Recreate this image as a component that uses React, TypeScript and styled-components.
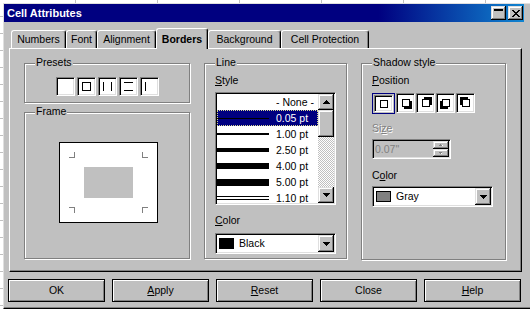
import React from 'react';
import styled, { createGlobalStyle, css } from 'styled-components';

const FONT = `"Liberation Sans", Arial, sans-serif`;

const GlobalStyle = createGlobalStyle`
  html, body { margin: 0; padding: 0; }
  body {
    width: 530px;
    height: 309px;
    overflow: hidden;
    font-family: ${FONT};
    font-size: 10.5px;
    color: #000;
    background-color: #fff;
    background-image:
      repeating-linear-gradient(90deg, transparent 0 81px, #c0c0c0 81px 82px),
      repeating-linear-gradient(180deg, transparent 0 16px, #c0c0c0 16px 17px);
    background-position: -6px 0, 0 0;
  }
  #root { padding: 3px 0 0 3px; }
`;

const raised = css`
  background: #c0c0c0;
  box-shadow: inset -1px -1px #000, inset 1px 1px #dfdfdf, inset -2px -2px #808080, inset 2px 2px #fff;
`;

const sunken = css`
  border: 1px solid;
  border-color: #808080 #fff #fff #808080;
  box-shadow: inset 1px 1px #000, inset -1px -1px #dfdfdf;
  padding: 1px;
`;

const Window = styled.div`
  box-sizing: border-box;
  width: 530px;
  height: 306px;
  background: #c0c0c0;
  border-top: 1px solid #dfdfdf;
  border-left: 1px solid #dfdfdf;
  border-bottom: 1px solid #000;
  box-shadow: inset 0 -1px #808080;
  display: flex;
  flex-direction: column;
  align-items: flex-start;
`;

const TitleBar = styled.div`
  box-sizing: border-box;
  width: 520px;
  height: 18px;
  padding: 0 1px 0 3px;
  display: flex;
  align-items: center;
  background: linear-gradient(90deg, #000080 0%, #000080 72%, #1084d0 100%);
  color: #fff;
  font-weight: bold;
  font-size: 11px;
  line-height: 13px;
`;

const TitleButtons = styled.div`
  margin-left: auto;
  display: flex;
  gap: 2px;
`;

const TitleButton = styled.div`
  ${raised};
  width: 15px;
  height: 14px;
  display: flex;
  align-items: center;
  justify-content: center;
`;

const TabsRow = styled.div`
  position: relative;
  z-index: 1;
  display: flex;
  align-items: flex-end;
  height: 20px;
  margin-top: 6px;
  padding-left: 7px;
`;

const Tab = styled.div<{ $w: number; $active?: boolean }>`
  box-sizing: border-box;
  width: ${p => p.$w}px;
  height: ${p => (p.$active ? 21 : 18)}px;
  margin-bottom: ${p => (p.$active ? -1 : 0)}px;
  padding-top: ${p => (p.$active ? 4 : 2)}px;
  border-top: 1px solid #fff;
  border-left: 1px solid #fff;
  border-right: 1px solid #000;
  border-radius: 3px 3px 0 0;
  box-shadow: inset -1px 0 #808080;
  background: #c0c0c0;
  text-align: center;
  line-height: 13px;
  white-space: nowrap;
  font-weight: ${p => (p.$active ? 'bold' : 'normal')};
`;

const Panel = styled.div`
  box-sizing: border-box;
  margin-left: 5px;
  width: 513px;
  height: 224px;
  border-top: 1px solid #fff;
  border-left: 1px solid #fff;
  border-right: 1px solid #000;
  border-bottom: 1px solid #000;
  box-shadow: inset -1px -1px #808080;
  padding: 14px 0 0 14px;
  display: flex;
  gap: 14px;
  align-items: flex-start;
`;

const Column = styled.div`
  display: flex;
  flex-direction: column;
  gap: 9px;
`;

const Group = styled.div<{ $w: number; $h: number }>`
  position: relative;
  box-sizing: border-box;
  width: ${p => p.$w}px;
  height: ${p => p.$h}px;
  border: 1px solid #808080;
  box-shadow: inset 1px 1px #fff, 1px 1px #fff;
`;

const PresetsGroup = styled(Group)`
  display: flex;
  justify-content: center;
  padding: 13px 0 0 1px;
`;

const FrameGroup = styled(Group)`
  padding: 29px 0 0 34px;
`;

const FieldsGroup = styled(Group)`
  padding: 10px 0 0 10px;
  display: flex;
  flex-direction: column;
  align-items: flex-start;
`;

const Legend = styled.span`
  position: absolute;
  top: -8px;
  left: 10px;
  padding: 0 1px;
  background: #c0c0c0;
  line-height: 13px;
  white-space: nowrap;
`;

const FieldLabel = styled.div<{ $mt?: number; $mb?: number; $disabled?: boolean }>`
  line-height: 13px;
  margin-top: ${p => p.$mt ?? 0}px;
  margin-bottom: ${p => p.$mb ?? 0}px;
  color: ${p => (p.$disabled ? '#808080' : '#000')};
  text-shadow: ${p => (p.$disabled ? '1px 1px #fff' : 'none')};
`;

const PresetRow = styled.div`
  display: flex;
  gap: 2px;
  height: 19px;
`;

const PresetButton = styled.div`
  box-sizing: border-box;
  width: 19px;
  height: 19px;
  ${sunken};
  background: #fff;
  display: flex;
`;

const ListBox = styled.div`
  box-sizing: border-box;
  width: 121px;
  height: 113px;
  ${sunken};
  background: #fff;
  display: flex;
`;

const ListItems = styled.div`
  flex: 1;
  overflow: hidden;
  display: flex;
  flex-direction: column;
`;

const ListRow = styled.div<{ $selected?: boolean }>`
  flex: none;
  height: 16px;
  display: flex;
  align-items: center;
  line-height: 16px;
  white-space: nowrap;
  background: ${p => (p.$selected ? '#000080' : 'transparent')};
  color: ${p => (p.$selected ? '#fff' : '#000')};
  outline: ${p => (p.$selected ? '1px dotted #d8d890' : 'none')};
  outline-offset: -1px;
`;

const LineSample = styled.div<{ $t: number; $double?: boolean }>`
  flex: none;
  box-sizing: border-box;
  width: 52px;
  margin-right: 7px;
  height: ${p => (p.$double ? 4 : p.$t)}px;
  background: ${p => (p.$double ? 'transparent' : '#000')};
  border-top: ${p => (p.$double ? '1px solid #000' : 'none')};
  border-bottom: ${p => (p.$double ? '1px solid #000' : 'none')};
`;

const ScrollBar = styled.div`
  width: 16px;
  display: flex;
  flex-direction: column;
`;

const ScrollButton = styled.div<{ $h: number }>`
  ${raised};
  flex: none;
  height: ${p => p.$h}px;
  display: flex;
  align-items: center;
  justify-content: center;
`;

const ScrollTrack = styled.div`
  flex: 1;
  background: repeating-conic-gradient(#c0c0c0 0 25%, #fff 0 50%) 0 0 / 2px 2px;
`;

const Select = styled.div<{ $w: number }>`
  box-sizing: border-box;
  width: ${p => p.$w}px;
  height: 21px;
  ${sunken};
  background: #fff;
  display: flex;
  align-items: center;
`;

const Swatch = styled.div<{ $color: string }>`
  box-sizing: border-box;
  width: 15px;
  height: 11px;
  margin-left: 2px;
  background: ${p => p.$color};
  border: 1px solid #000;
`;

const SelectText = styled.div`
  flex: 1;
  margin-left: 5px;
  line-height: 17px;
`;

const DropButton = styled.div`
  ${raised};
  width: 16px;
  height: 17px;
  display: flex;
  align-items: center;
  justify-content: center;
`;

const PosRow = styled.div`
  display: flex;
  gap: 1px;
  align-items: flex-start;
`;

const PosButton = styled.div<{ $sel?: boolean }>`
  box-sizing: border-box;
  width: ${p => (p.$sel ? 23 : 19)}px;
  height: ${p => (p.$sel ? 21 : 20)}px;
  display: flex;
  ${p => p.$sel && css`
    border: 1px solid #000080;
    padding: 1px;
  `}
`;

const PosFace = styled.div`
  flex: 1;
  box-sizing: border-box;
  ${sunken};
  background: #fff;
  display: flex;
  align-items: center;
  justify-content: center;
`;

const SizeField = styled.div`
  box-sizing: border-box;
  width: 79px;
  height: 20px;
  ${sunken};
  background: #c0c0c0;
  display: flex;
  align-items: stretch;
`;

const SizeText = styled.div`
  flex: 1;
  padding-left: 1px;
  line-height: 16px;
  color: #808080;
`;

const Spin = styled.div`
  width: 16px;
  display: flex;
  flex-direction: column;
`;

const SpinButton = styled.div`
  ${raised};
  flex: 1;
  display: flex;
  align-items: center;
  justify-content: center;
`;

const ButtonRow = styled.div`
  display: flex;
  gap: 7px;
  margin: 7px 0 0 4px;
`;

const PushButton = styled.button`
  box-sizing: border-box;
  width: 97px;
  height: 23px;
  padding: 0;
  border: 1px solid #000;
  background: #c0c0c0;
  box-shadow: inset 1px 1px #fff, inset -1px -1px #808080;
  font-family: ${FONT};
  font-size: 10.5px;
  color: #000;
  line-height: 13px;
`;

const ArrowDown = ({ color = '#000' }: { color?: string }) => (
  <svg width="7" height="4" viewBox="0 0 7 4" shapeRendering="crispEdges">
    <path d="M0 0h7v1h-1v1h-1v1h-1v1h-1v-1h-1v-1h-1v-1h-1z" fill={color} />
  </svg>
);

const ArrowUp = ({ color = '#000' }: { color?: string }) => (
  <svg width="7" height="4" viewBox="0 0 7 4" shapeRendering="crispEdges">
    <path d="M0 4h7v-1h-1v-1h-1v-1h-1v-1h-1v1h-1v1h-1v1h-1z" fill={color} />
  </svg>
);

const SmallArrow = ({ up }: { up?: boolean }) => (
  <svg width="6" height="4" viewBox="0 0 6 4" shapeRendering="crispEdges">
    <path d={up ? 'M2 1h1v1h1v1h-3v-1h1z' : 'M1 1h3v1h-1v1h-1v-1h-1z'} fill="#808080" />
    <path d={up ? 'M4 2h1v1h-1z' : 'M3 2h1v1h-1z'} fill="#fff" />
  </svg>
);

const PresetIcon = ({ d, box }: { d?: string; box?: boolean }) => (
  <svg width="15" height="15" viewBox="0 0 15 15" shapeRendering="crispEdges">
    {box && <rect x="3.5" y="3.5" width="8" height="8" fill="none" stroke="#000" />}
    {d && <path d={d} stroke="#000" fill="none" />}
  </svg>
);

const ShadowIcon = ({ dx, dy }: { dx: number; dy: number }) => (
  <svg width="12" height="12" viewBox="0 0 12 12" shapeRendering="crispEdges">
    {(dx !== 0 || dy !== 0) && <rect x={2 + dx} y={2 + dy} width="8" height="8" fill="#000" />}
    <rect x="2.5" y="2.5" width="7" height="7" fill="#fff" stroke="#000" />
  </svg>
);

const FramePreview = () => (
  <svg width="99" height="81" viewBox="0 0 99 81" shapeRendering="crispEdges">
    <rect x="0.5" y="0.5" width="98" height="80" fill="#fff" stroke="#000" />
    <rect x="25" y="25" width="49" height="31" fill="#c0c0c0" />
    <path
      d="M15.5 10V16M10 15.5H16M83.5 10V16M83 15.5H89M10 65.5H16M15.5 65V71M83 65.5H89M83.5 65V71"
      stroke="#808080"
      fill="none"
    />
  </svg>
);

const lineStyles = [
  { label: '- None -', t: 0 },
  { label: '0.05 pt', t: 1, selected: true },
  { label: '1.00 pt', t: 2 },
  { label: '2.50 pt', t: 4 },
  { label: '4.00 pt', t: 6 },
  { label: '5.00 pt', t: 7 },
  { label: '1.10 pt', t: 0, double: true },
];

const shadowPositions = [
  { dx: 0, dy: 0, sel: true },
  { dx: 2, dy: 2 },
  { dx: 2, dy: -2 },
  { dx: -2, dy: 2 },
  { dx: -2, dy: -2 },
];

const tabs = [
  { label: 'Numbers', w: 55 },
  { label: 'Font', w: 31 },
  { label: 'Alignment', w: 59 },
  { label: 'Borders', w: 52, active: true },
  { label: 'Background', w: 73 },
  { label: 'Cell Protection', w: 88 },
];

export default function App() {
  return (
    <>
      <GlobalStyle />
      <Window>
        <TitleBar>
          <span>Cell Attributes</span>
          <TitleButtons>
            <TitleButton>
              <svg width="9" height="9" viewBox="0 0 9 9" shapeRendering="crispEdges">
                <rect x="0" y="0" width="9" height="2" fill="#000" />
              </svg>
            </TitleButton>
            <TitleButton>
              <svg width="8" height="7" viewBox="0 0 8 7" shapeRendering="crispEdges">
                <path
                  d="M0 0h2v1h1v1h2v-1h1v-1h2v1h-1v1h-1v1h-1v1h1v1h1v1h1v1h-2v-1h-1v-1h-2v1h-1v1h-2v-1h1v-1h1v-1h1v-1h-1v-1h-1v-1h-1z"
                  fill="#000"
                />
              </svg>
            </TitleButton>
          </TitleButtons>
        </TitleBar>

        <TabsRow>
          {tabs.map(t => (
            <Tab key={t.label} $w={t.w} $active={t.active}>
              {t.label}
            </Tab>
          ))}
        </TabsRow>

        <Panel>
          <Column>
            <PresetsGroup $w={166} $h={40}>
              <Legend>Presets</Legend>
              <PresetRow>
                <PresetButton><PresetIcon /></PresetButton>
                <PresetButton><PresetIcon box /></PresetButton>
                <PresetButton><PresetIcon d="M3.5 3V12M11.5 3V12" /></PresetButton>
                <PresetButton><PresetIcon d="M3 3.5H12M3 11.5H12" /></PresetButton>
                <PresetButton><PresetIcon d="M3.5 3V12" /></PresetButton>
              </PresetRow>
            </PresetsGroup>
            <FrameGroup $w={166} $h={147}>
              <Legend>Frame</Legend>
              <FramePreview />
            </FrameGroup>
          </Column>

          <FieldsGroup $w={143} $h={196}>
            <Legend>Line</Legend>
            <FieldLabel $mb={5}><u>S</u>tyle</FieldLabel>
            <ListBox>
              <ListItems>
                {lineStyles.map(s => (
                  <ListRow key={s.label} $selected={s.selected}>
                    <LineSample $t={s.t} $double={s.double} />
                    {s.label}
                  </ListRow>
                ))}
              </ListItems>
              <ScrollBar>
                <ScrollButton $h={16}><ArrowUp /></ScrollButton>
                <ScrollButton $h={27} />
                <ScrollTrack />
                <ScrollButton $h={16}><ArrowDown /></ScrollButton>
              </ScrollBar>
            </ListBox>
            <FieldLabel $mt={9} $mb={6}><u>C</u>olor</FieldLabel>
            <Select $w={121}>
              <Swatch $color="#000" />
              <SelectText>Black</SelectText>
              <DropButton><ArrowDown /></DropButton>
            </Select>
          </FieldsGroup>

          <FieldsGroup $w={145} $h={197}>
            <Legend>Shadow style</Legend>
            <FieldLabel $mb={6}><u>P</u>osition</FieldLabel>
            <PosRow>
              {shadowPositions.map((p, i) => (
                <PosButton key={i} $sel={p.sel}>
                  <PosFace>
                    <ShadowIcon dx={p.dx} dy={p.dy} />
                  </PosFace>
                </PosButton>
              ))}
            </PosRow>
            <FieldLabel $mt={8} $mb={4} $disabled>Si<u>z</u>e</FieldLabel>
            <SizeField>
              <SizeText>0.07"</SizeText>
              <Spin>
                <SpinButton><SmallArrow up /></SpinButton>
                <SpinButton><SmallArrow /></SpinButton>
              </Spin>
            </SizeField>
            <FieldLabel $mt={10} $mb={4}>C<u>o</u>lor</FieldLabel>
            <Select $w={121}>
              <Swatch $color="#808080" />
              <SelectText>Gray</SelectText>
              <DropButton><ArrowDown /></DropButton>
            </Select>
          </FieldsGroup>
        </Panel>

        <ButtonRow>
          <PushButton>OK</PushButton>
          <PushButton><u>A</u>pply</PushButton>
          <PushButton><u>R</u>eset</PushButton>
          <PushButton>Close</PushButton>
          <PushButton><u>H</u>elp</PushButton>
        </ButtonRow>
      </Window>
    </>
  );
}
